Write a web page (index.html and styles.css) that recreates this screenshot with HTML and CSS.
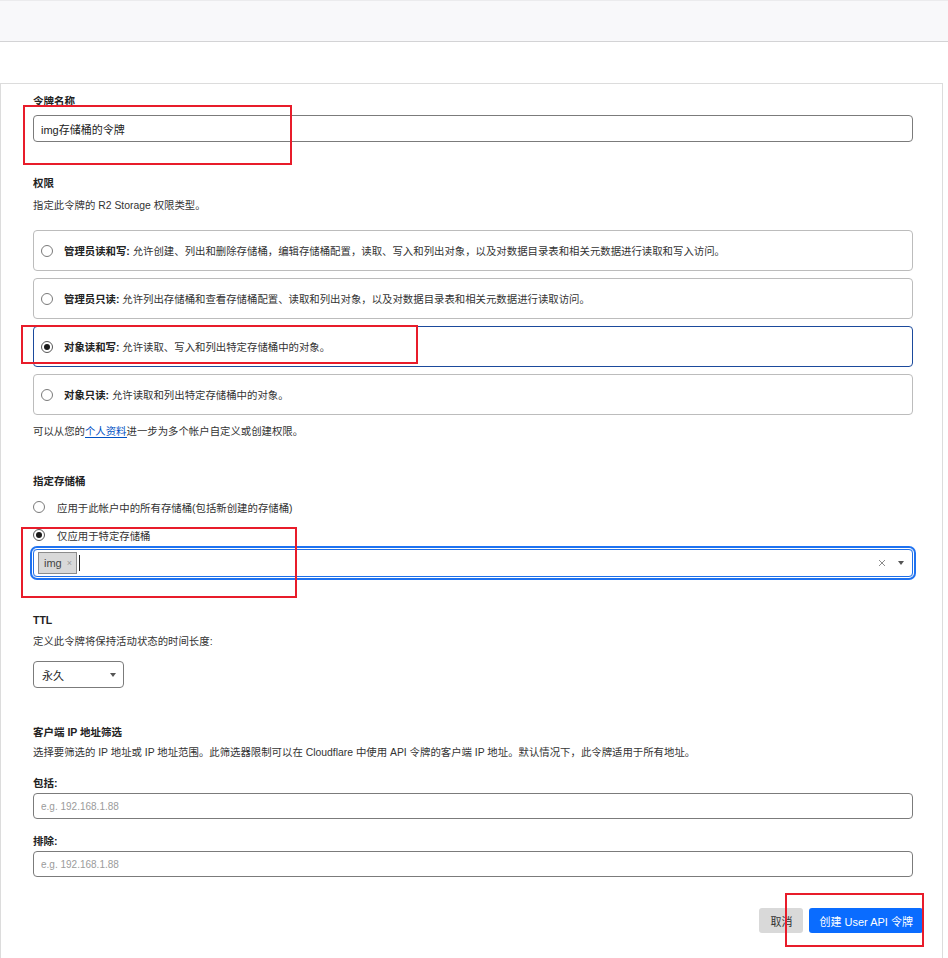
FILE: index.html
```html
<!DOCTYPE html>
<html lang="zh-CN">
<head>
    <meta charset="UTF-8">
    <meta name="viewport" content="width=device-width, initial-scale=1.0">
    <title>创建 User API 令牌</title>
    <link rel="stylesheet" href="styles.css">
</head>
<body>
<div class="page">

    <!-- Header strip -->
    <div class="topbar"></div>

    <div class="card">

        <!-- Token name -->
        <div class="field">
            <label class="label">令牌名称</label>
            <input type="text" class="text-input name-input" value="img存储桶的令牌">
        </div>

        <!-- Permissions -->
        <div class="section">
            <h3 class="label">权限</h3>
            <p class="hint hint-top">指定此令牌的 R2 Storage 权限类型。</p>
            <div class="options">
                <div class="option">
                    <span class="radio"></span>
                    <span><b>管理员读和写:</b> 允许创建、列出和删除存储桶，编辑存储桶配置，读取、写入和列出对象，以及对数据目录表和相关元数据进行读取和写入访问。</span>
                </div>
                <div class="option">
                    <span class="radio"></span>
                    <span><b>管理员只读:</b> 允许列出存储桶和查看存储桶配置、读取和列出对象，以及对数据目录表和相关元数据进行读取访问。</span>
                </div>
                <div class="option selected">
                    <span class="radio checked"></span>
                    <span><b>对象读和写:</b> 允许读取、写入和列出特定存储桶中的对象。</span>
                </div>
                <div class="option">
                    <span class="radio"></span>
                    <span><b>对象只读:</b> 允许读取和列出特定存储桶中的对象。</span>
                </div>
            </div>
            <p class="hint note">可以从您的<a href="#">个人资料</a>进一步为多个帐户自定义或创建权限。</p>
        </div>

        <!-- Buckets -->
        <div class="section">
            <h3 class="label">指定存储桶</h3>
            <div class="radio-row">
                <span class="radio"></span>
                <span>应用于此帐户中的所有存储桶(包括新创建的存储桶)</span>
            </div>
            <div class="radio-row">
                <span class="radio checked"></span>
                <span>仅应用于特定存储桶</span>
            </div>
            <div class="multi-select">
                <span class="tag">img <span class="tag-x">×</span></span>
                <span class="caret"></span>
                <span class="clear">
                    <svg width="8" height="8" viewBox="0 0 8 8"><path d="M1 1L7 7M7 1L1 7" stroke="#8c8c8c" stroke-width="1"/></svg>
                </span>
                <span class="arrow"></span>
            </div>
        </div>

        <!-- TTL -->
        <div class="section section-ttl">
            <h3 class="label">TTL</h3>
            <p class="hint hint-ttl">定义此令牌将保持活动状态的时间长度:</p>
            <div class="select">
                <span>永久</span>
                <span class="arrow"></span>
            </div>
        </div>

        <!-- Client IP filter -->
        <div class="section section-ip">
            <h3 class="label">客户端 IP 地址筛选</h3>
            <p class="hint hint-ip">选择要筛选的 IP 地址或 IP 地址范围。此筛选器限制可以在 Cloudflare 中使用 API 令牌的客户端 IP 地址。默认情况下，此令牌适用于所有地址。</p>
            <label class="label sub-label">包括:</label>
            <input type="text" class="text-input ip-input" placeholder="e.g. 192.168.1.88">
            <label class="label sub-label">排除:</label>
            <input type="text" class="text-input ip-input" placeholder="e.g. 192.168.1.88">
        </div>

        <div class="actions">
            <button class="btn btn-cancel">取消</button>
            <button class="btn btn-primary">创建 User API 令牌</button>
        </div>
    </div>

    <!-- Red highlight boxes -->
    <div class="mark mark-name"></div>
    <div class="mark mark-option"></div>
    <div class="mark mark-bucket"></div>
    <div class="mark mark-submit"></div>
</div>
</body>
</html>
```

FILE: styles.css
```css
/* General */
body {
    margin: 0;
    padding: 0;
    background: #fff;
    font-family: "Liberation Sans", "Noto Sans CJK SC", sans-serif;
    font-size: 10.4px;
    color: #333;
}

.page {
    position: relative;
    width: 948px;
    height: 958px;
    overflow: hidden;
}

/* Header strip */
.topbar {
    height: 40px;
    background: #f8f8fa;
    border-top: 1px solid #ebebed;
    border-bottom: 1px solid #d3d3d5;
}

/* Card */
.card {
    width: 943px;
    box-sizing: border-box;
    margin-top: 41px;
    padding: 9px 29px 40px 32px;
    border: 1px solid #dcdcdc;
    border-bottom: none;
}

.label {
    display: block;
    margin: 0;
    font-size: 10.5px;
    line-height: 16px;
    font-weight: bold;
    color: #222;
}

.hint {
    margin: 0;
    line-height: 16px;
}

.hint a {
    color: #0051c3;
    text-decoration: none;
    border-bottom: 1px solid #0051c3;
}

/* Inputs */
.text-input {
    display: block;
    width: 100%;
    box-sizing: border-box;
    border: 1px solid #7b7b7b;
    border-radius: 4px;
    padding: 0 7px;
    font-family: inherit;
    color: #222;
    outline: none;
}

.name-input {
    margin-top: 6px;
    height: 27px;
    font-size: 11px;
}

.ip-input {
    margin-top: 2px;
    height: 26px;
    font-size: 10px;
}

.ip-input::placeholder {
    color: #9b9b9b;
}

/* Sections */
.section {
    margin-top: 33px;
}

.hint-top {
    margin-top: 7px;
}

.section-ttl {
    margin-top: 35px;
}

.hint-ttl {
    margin-top: 6px;
}

.section-ip {
    margin-top: 36px;
}

.hint-ip {
    margin-top: 5px;
}

.sub-label {
    margin-top: 14px;
}

/* Permission options */
.options {
    margin-top: 16px;
    display: flex;
    flex-direction: column;
    gap: 7px;
}

.option {
    display: flex;
    align-items: center;
    gap: 11px;
    height: 41px;
    box-sizing: border-box;
    padding: 0 7px;
    border: 1px solid #bcbcbc;
    border-radius: 4px;
}

.option b {
    color: #222;
}

.option.selected {
    border-color: #1b4a9c;
}

.note {
    margin-top: 9px;
}

/* Radios */
.radio {
    flex: none;
    width: 10px;
    height: 10px;
    border: 1px solid #7a7a7a;
    border-radius: 50%;
    background: #fff;
    position: relative;
}

.radio.checked {
    border-color: #555;
}

.radio.checked::after {
    content: "";
    position: absolute;
    left: 2px;
    top: 2px;
    width: 6px;
    height: 6px;
    border-radius: 50%;
    background: #1a1a1a;
}

.radio-row {
    display: flex;
    align-items: center;
    gap: 12px;
    height: 20px;
    margin-top: 8px;
}

/* Bucket multi select */
.multi-select {
    margin-top: 4px;
    height: 28px;
    box-sizing: border-box;
    display: flex;
    align-items: center;
    padding: 0 4px;
    border: 1px solid #1f6fe8;
    border-radius: 4px;
    box-shadow: 0 0 0 1px #fff, 0 0 0 3px #1f72f0;
}

.tag {
    display: flex;
    align-items: center;
    gap: 5px;
    height: 22px;
    box-sizing: border-box;
    padding: 0 4px 0 5px;
    background: #d9d9d9;
    border: 1px solid #8c8c8c;
    color: #444;
    font-size: 11px;
}

.tag-x {
    font-size: 9px;
    color: #999;
}

.caret {
    width: 1px;
    height: 16px;
    margin-left: 2px;
    background: #222;
}

.clear {
    margin-left: auto;
    display: flex;
}

.arrow {
    width: 0;
    height: 0;
    border-left: 3.5px solid transparent;
    border-right: 3.5px solid transparent;
    border-top: 4px solid #555;
}

.multi-select .arrow {
    margin: 0 4px 0 12px;
}

/* TTL select */
.select {
    margin-top: 11px;
    width: 91px;
    height: 27px;
    box-sizing: border-box;
    display: flex;
    align-items: center;
    justify-content: space-between;
    padding: 0 7px 0 8px;
    border: 1px solid #7b7b7b;
    border-radius: 4px;
    color: #222;
    font-size: 11px;
}

/* Buttons */
.actions {
    display: flex;
    justify-content: flex-end;
    gap: 6px;
    margin-top: 31px;
    margin-right: -10px;
}

.btn {
    height: 25px;
    border: none;
    border-radius: 3px;
    font-family: inherit;
    font-size: 11px;
    padding: 0 10px;
    cursor: pointer;
}

.btn-cancel {
    background: #d9d9d9;
    color: #333;
    padding: 0 11px;
}

.btn-primary {
    background: #0a6cff;
    color: #fff;
}

/* Red highlight boxes */
.mark {
    position: absolute;
    border: 2px solid #e81c2a;
}

.mark-name {
    left: 23px;
    top: 105px;
    width: 265px;
    height: 56px;
}

.mark-option {
    left: 21px;
    top: 325px;
    width: 393px;
    height: 35px;
}

.mark-bucket {
    left: 21px;
    top: 527px;
    width: 272px;
    height: 67px;
}

.mark-submit {
    left: 785px;
    top: 893px;
    width: 135px;
    height: 50px;
}
```
